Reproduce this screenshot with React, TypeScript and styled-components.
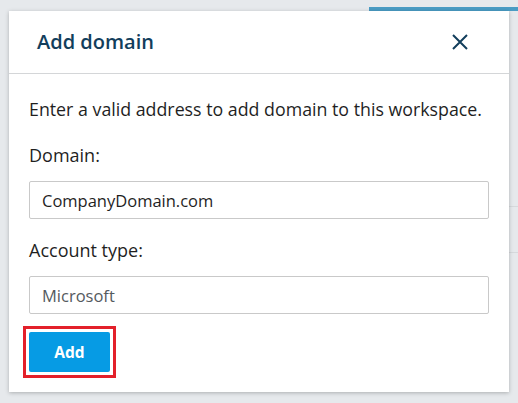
import React from 'react'
import styled, { createGlobalStyle } from 'styled-components'

const GlobalStyle = createGlobalStyle`
  html, body {
    margin: 0;
    padding: 0;
    background: #e6e9ec;
    font-family: "Open Sans", "Noto Sans", sans-serif;
  }
`

// Page behind the dialog
const Page = styled.div`
  position: relative;
  width: 518px;
  height: 403px;
  overflow: hidden;
  background: #e6e9ec;
`

const PageBar = styled.div`
  margin-left: 369px;
  margin-top: 7px;
  height: 4px;
  background: #4a9cc4;
`

const PageRow = styled.div<{ $top: number }>`
  margin-top: ${(p) => p.$top}px;
  margin-left: 509px;
  height: 1px;
  background: #d6d9dc;
`

// Dialog
const Dialog = styled.div`
  position: absolute;
  left: 9px;
  top: 11px;
  width: 500px;
  height: 381px;
  background: #fff;
  box-shadow: 0 1px 4px rgba(0, 0, 0, 0.25);
  display: flex;
  flex-direction: column;
`

const Header = styled.div`
  height: 62px;
  border-bottom: 1px solid #d4d6d8;
  display: flex;
  align-items: center;
  justify-content: space-between;
  padding: 0 41px 0 28px;
`

const Title = styled.h2`
  margin: 0;
  font-size: 20px;
  line-height: 24px;
  font-weight: 600;
  color: #123e5c;
`

const CloseButton = styled.button`
  border: 0;
  background: none;
  padding: 0;
  width: 16px;
  height: 16px;
  display: flex;
  cursor: pointer;
`

const Body = styled.div`
  padding: 24px 20px 0 20px;
  display: flex;
  flex-direction: column;
`

const Intro = styled.p`
  margin: 0 0 24px;
  font-size: 17.8px;
  line-height: 22px;
  color: #1f1f1f;
`

const Label = styled.label`
  font-size: 18px;
  line-height: 22px;
  color: #1f1f1f;
  margin-bottom: 15px;
`

const Field = styled.div<{ $muted?: boolean; $gap: number }>`
  height: 36px;
  border: 1px solid #c9c9c9;
  border-radius: 2px;
  display: flex;
  align-items: center;
  padding: 0 12px;
  font-size: 16.5px;
  color: ${(p) => (p.$muted ? '#555a5e' : '#1f1f1f')};
  margin-bottom: ${(p) => p.$gap}px;
`

const Highlight = styled.div`
  align-self: flex-start;
  margin-left: -6px;
  border: 3px solid #e3202a;
  padding: 3px;
`

const AddButton = styled.button`
  width: 81px;
  height: 40px;
  border: 0;
  border-radius: 2px;
  background: #069be4;
  color: #fff;
  font-family: "Open Sans", sans-serif;
  font-size: 15.5px;
  font-weight: 700;
  display: block;
`

export default function App() {
  return (
    <>
      <GlobalStyle />
      <Page>
        <PageBar />
        <PageRow $top={195} />
        <PageRow $top={45} />
        <Dialog>
          <Header>
            <Title>Add domain</Title>
            <CloseButton aria-label="Close">
              <svg width="16" height="16" viewBox="0 0 16 16">
                <path d="M1 1 L15 15 M15 1 L1 15" stroke="#123e5c" strokeWidth="2" />
              </svg>
            </CloseButton>
          </Header>
          <Body>
            <Intro>Enter a valid address to add domain to this workspace.</Intro>
            <Label>Domain:</Label>
            <Field $gap={20}>CompanyDomain.com</Field>
            <Label>Account type:</Label>
            <Field $muted $gap={12}>Microsoft</Field>
            <Highlight>
              <AddButton>Add</AddButton>
            </Highlight>
          </Body>
        </Dialog>
      </Page>
    </>
  )
}
